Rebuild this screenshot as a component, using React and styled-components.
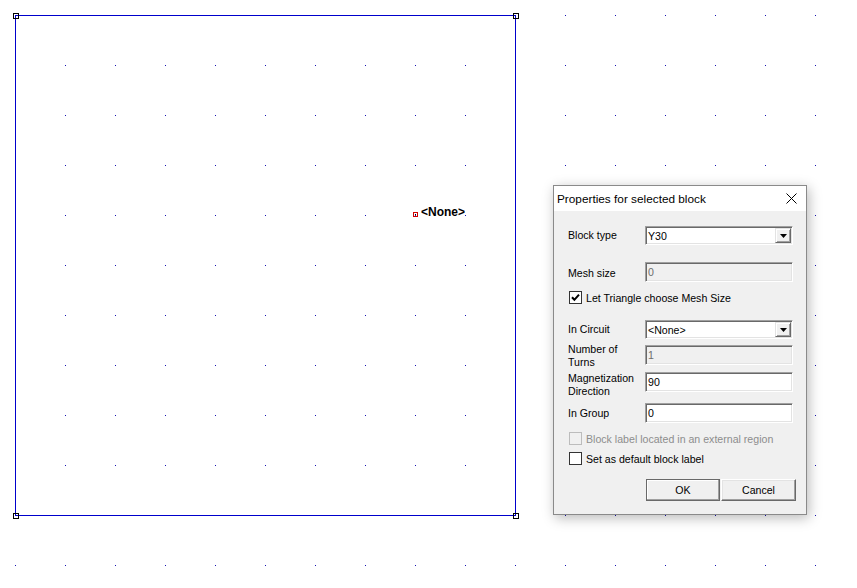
import React from "react";
import styled, { createGlobalStyle } from "styled-components";

const GlobalStyle = createGlobalStyle`
  html, body {
    margin: 0;
    padding: 0;
    background: #ffffff;
    overflow: hidden;
  }
`;

const Page = styled.div`
  position: relative;
  width: 857px;
  height: 588px;
  background: #ffffff;
  font-family: "Liberation Sans", Arial, sans-serif;
`;

const Drawing = styled.svg`
  display: block;
`;

/* the block properties window floats over the drawing */
const Dialog = styled.div`
  position: absolute;
  left: 553px;
  top: 185px;
  width: 252px;
  height: 328px;
  border: 1px solid #8a8a8a;
  background: #f0f0f0;
  box-shadow: 2px 3px 12px rgba(0, 0, 0, 0.28);
  display: flex;
  flex-direction: column;
  font-size: 10.6px;
  color: #000;
`;

const TitleBar = styled.div`
  height: 25px;
  background: #ffffff;
  display: flex;
  align-items: center;
  justify-content: space-between;
  padding: 0 9px 0 3px;
  font-size: 11.8px;
`;

const CloseIcon = () => (
  <svg width="11" height="11" viewBox="0 0 11 11">
    <path d="M0.5 0.5 L10.5 10.5 M10.5 0.5 L0.5 10.5" stroke="#000" strokeWidth="1" />
  </svg>
);

const Body = styled.div`
  display: flex;
  flex-direction: column;
  padding: 0 0 0 14px;
`;

const Row = styled.div`
  display: flex;
  align-items: center;
  height: ${({ $h }) => $h || 20}px;
  margin-top: ${({ $mt }) => $mt || 0}px;
`;

const Label = styled.div`
  width: 77px;
  line-height: 13px;
  margin-top: ${({ $shift }) => $shift || 0}px;
`;

const Edit = styled.div`
  box-sizing: border-box;
  width: 148px;
  height: ${({ $h }) => $h || 20}px;
  border-top: 1px solid #a0a0a0;
  border-left: 1px solid #a0a0a0;
  border-right: 1px solid #ffffff;
  border-bottom: 1px solid #ffffff;
  box-shadow: inset 1px 1px 0 #696969, inset -1px -1px 0 #e3e3e3;
  background: ${({ $disabled }) => ($disabled ? "#f0f0f0" : "#ffffff")};
  color: ${({ $disabled }) => ($disabled ? "#6d6d6d" : "#000000")};
  display: flex;
  align-items: center;
  padding-left: 2px;
  position: relative;
`;

const DropButton = styled.div`
  position: absolute;
  right: 1px;
  top: 1px;
  bottom: 1px;
  width: 16px;
  box-sizing: border-box;
  background: #f0f0f0;
  border-top: 1px solid #e3e3e3;
  border-left: 1px solid #e3e3e3;
  border-right: 1px solid #696969;
  border-bottom: 1px solid #696969;
  box-shadow: inset 1px 1px 0 #ffffff, inset -1px -1px 0 #a0a0a0;
  display: flex;
  align-items: center;
  justify-content: center;
`;

const Arrow = () => (
  <svg width="7" height="4" viewBox="0 0 7 4">
    <path d="M0 0 H7 L3.5 4 Z" fill="#000" />
  </svg>
);

const Combo = ({ value }) => (
  <Edit $h={19}>
    {value}
    <DropButton>
      <Arrow />
    </DropButton>
  </Edit>
);

const CheckRow = styled(Row)`
  height: 13px;
  padding-left: 1px;
  color: ${({ $disabled }) => ($disabled ? "#8d8d8d" : "#000")};
`;

const Box = styled.div`
  box-sizing: border-box;
  width: 13px;
  height: 13px;
  border: 1px solid ${({ $disabled }) => ($disabled ? "#bcbcbc" : "#333333")};
  background: ${({ $disabled }) => ($disabled ? "#f0f0f0" : "#ffffff")};
  margin-right: 4px;
  display: flex;
  align-items: center;
  justify-content: center;
`;

const Tick = () => (
  <svg width="9" height="9" viewBox="0 0 9 9">
    <path d="M1 4.2 L3.4 6.8 L8 1.6" stroke="#000" strokeWidth="2" fill="none" />
  </svg>
);

const ButtonBar = styled.div`
  display: flex;
  justify-content: flex-end;
  gap: 1px;
  margin-top: 14px;
  padding-right: 10px;
`;

const Button = styled.div`
  box-sizing: border-box;
  width: ${({ $w }) => $w}px;
  height: 22px;
  background: #f0f0f0;
  border-top: 1px solid ${({ $default }) => ($default ? "#696969" : "#ffffff")};
  border-left: 1px solid ${({ $default }) => ($default ? "#696969" : "#ffffff")};
  border-right: 1px solid #696969;
  border-bottom: 1px solid #696969;
  box-shadow: inset -1px -1px 0 #a0a0a0, inset 1px 1px 0 ${({ $default }) => ($default ? "#ffffff" : "#e3e3e3")};
  display: flex;
  align-items: center;
  justify-content: center;
`;

const dots = [];
for (let x = 15; x < 857; x += 50) {
  for (let y = 15; y < 588; y += 50) {
    dots.push(<rect key={`${x}-${y}`} x={x} y={y} width="1" height="1" fill="#1414b4" />);
  }
}

const Node = ({ x, y }) => (
  <rect x={x - 2} y={y - 2} width="5" height="5" fill="none" stroke="#000" strokeWidth="1" shapeRendering="crispEdges" />
);

const App = () => {
  return (
    <Page>
      <GlobalStyle />
      <Drawing width="857" height="588" viewBox="0 0 857 588">
        {dots}
        <rect x="15.5" y="15.5" width="500" height="500" fill="none" stroke="#0000cc" strokeWidth="1" />
        <Node x={15.5} y={15.5} />
        <Node x={515.5} y={15.5} />
        <Node x={15.5} y={515.5} />
        <Node x={515.5} y={515.5} />
        <rect x="413.5" y="212.5" width="4" height="4" fill="none" stroke="#d00000" strokeWidth="1" />
        <rect x="415" y="214" width="1" height="1" fill="#000" />
        <text x="421" y="215.5" fontFamily="Liberation Sans, Arial, sans-serif" fontWeight="bold" fontSize="12">
          &lt;None&gt;
        </text>
      </Drawing>

      <Dialog>
        <TitleBar>
          <span>Properties for selected block</span>
          <CloseIcon />
        </TitleBar>
        <Body>
          <Row $h={19} $mt={15}>
            <Label>Block type</Label>
            <Combo value="Y30" />
          </Row>
          <Row $mt={17}>
            <Label $shift={2}>Mesh size</Label>
            <Edit $disabled>0</Edit>
          </Row>
          <CheckRow $mt={9}>
            <Box>
              <Tick />
            </Box>
            Let Triangle choose Mesh Size
          </CheckRow>
          <Row $h={19} $mt={16}>
            <Label>In Circuit</Label>
            <Combo value="<None>" />
          </Row>
          <Row $mt={6}>
            <Label $shift={1}>Number of Turns</Label>
            <Edit $disabled>1</Edit>
          </Row>
          <Row $mt={7}>
            <Label $shift={5}>Magnetization Direction</Label>
            <Edit>90</Edit>
          </Row>
          <Row $mt={11}>
            <Label $shift={1}>In Group</Label>
            <Edit>0</Edit>
          </Row>
          <CheckRow $mt={9} $disabled>
            <Box $disabled />
            Block label located in an external region
          </CheckRow>
          <CheckRow $mt={7}>
            <Box />
            Set as default block label
          </CheckRow>
          <ButtonBar>
            <Button $w={74} $default>OK</Button>
            <Button $w={75}>Cancel</Button>
          </ButtonBar>
        </Body>
      </Dialog>
    </Page>
  );
};

export default App;
